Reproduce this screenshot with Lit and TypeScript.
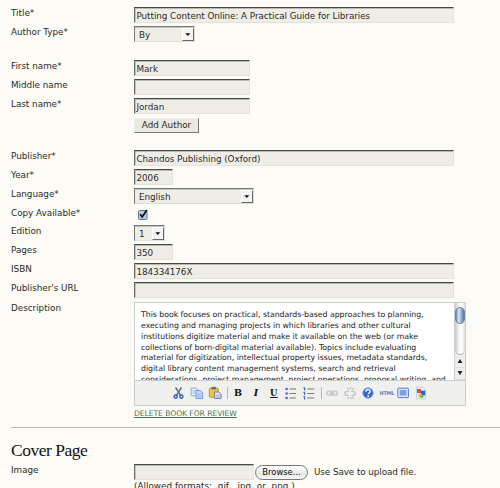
import { LitElement, html, svg, css } from "lit";
import { customElement, property } from "lit/decorators.js";

@customElement("form-row")
class FormRow extends LitElement {
  @property() label = "";
  static styles = css`
    :host { display: grid; grid-template-columns: 123px 1fr; height: 19px; }
    .label { white-space: nowrap; line-height: 12px; letter-spacing: -0.01px; }
    .body { display: flex; align-items: flex-start; min-width: 0; }
  `;
  render() {
    return html`<div class="label">${this.label}</div><div class="body"><slot></slot></div>`;
  }
}

@customElement("text-field")
class TextField extends LitElement {
  @property() value = "";
  static styles = css`
    :host {
      display: block; box-sizing: border-box; height: 16px; width: 320px; flex: none;
      background: #efeee6; border: 1px solid #e3e3da; border-top-color: #48484a; border-left-color: #6c6c6a;
      box-shadow: inset 0 1px #b9b9b4, inset 1px 0 #c4c4be;
      padding-left: 1.5px; line-height: 16px; letter-spacing: -0.055px; white-space: nowrap; overflow: hidden;
    }
    :host(.medium) { width: 116px; }
    :host(.small) { width: 39px; }
    :host(.file) { width: 120px; }
  `;
  render() { return html`${this.value}`; }
}

@customElement("select-field")
class SelectField extends LitElement {
  @property() value = "";
  static styles = css`
    :host {
      display: flex; box-sizing: border-box; height: 16px; width: 61px; flex: none; justify-content: space-between;
      background: #efeee6; border: 1px solid #deded6; border-top-color: #777775; border-left-color: #777775;
      box-shadow: inset 0 1px #c4c4be; padding: 1px 0 0 4px; line-height: 15px; letter-spacing: -0.05px;
    }
    :host(.wide) { width: 120px; }
    :host(.narrow) { width: 31px; }
    .arrow {
      box-sizing: border-box; width: 12px; height: 13px; background: #f3f3f5; flex: none;
      border: 1px solid #fff; border-right-color: #68686a; border-bottom-color: #68686a;
    }
    svg { display: block; }
  `;
  render() {
    return html`<span>${this.value}</span>
      <div class="arrow"><svg width="10" height="11" viewBox="0 0 10 11"><path d="M2.3 4.2h5L4.8 7z" fill="#111" /></svg></div>`;
  }
}

const listLines = [3, 7.5, 12];

const icons: Record<string, unknown> = {
  cut: svg`<path d="M2.6 1.5 7.7 9.6M8.4 1.5 3.3 9.6" stroke="#62738c" stroke-width="1.6" fill="none"/>
    <circle cx="2.7" cy="10.6" r="1.6" fill="none" stroke="#2b5fb0" stroke-width="1.4"/><circle cx="8.3" cy="10.6" r="1.6" fill="none" stroke="#2b5fb0" stroke-width="1.4"/>`,
  copy: svg`<path d="M.2 2h4.6l2 2v5.8H.2z" fill="#e3edff" stroke="#8eabe0"/><path d="M1.5 5h3M1.5 7h3" stroke="#a3bdec"/>
    <path d="M5 4.6h4.4l2.2 2.2v5.6H5z" fill="#c9dcff" stroke="#6f94d8"/><path d="M6.3 8.2h3.8M6.3 10.2h3.8" stroke="#8fb0ea"/>`,
  paste: svg`<rect x=".3" y="2.2" width="9" height="9" rx="1" fill="#f0c541" stroke="#b2983f"/><rect x="2.5" y=".8" width="4.5" height="2.6" rx=".8" fill="#6e7178"/>
    <path d="M5.4 6h4.3l2.4 2.2v4.2H5.4z" fill="#dbe5f6" stroke="#70829f"/><path d="M6.8 9.2h4M6.8 10.9h4" stroke="#8ba2c6" stroke-width=".8"/>`,
  bullets: svg`${listLines.map((y) => svg`<rect x=".5" y="${y - 1.1}" width="2.2" height="2.2" fill="#4264cb"/><path d="M4.5 ${y}h6.5" stroke="#777" stroke-width="1"/>`)}`,
  numbers: svg`${listLines.map((y) => svg`<path d="M.4 ${y - 1.2}h1.2v2.7" stroke="#4264cb" stroke-width="1.2" fill="none"/><path d="M4.2 ${y}h7" stroke="#777" stroke-width="1"/>`)}`,
  link: svg`<g fill="none" stroke="#bdc3ce" stroke-width="1.3"><rect x=".8" y="5.2" width="5.2" height="4" rx="2"/><rect x="6" y="5.2" width="5.2" height="4" rx="2"/><path d="M3.6 7.2h4.8"/></g>`,
  unlink: svg`<g fill="none" stroke="#bdc0c8" stroke-width="1.3"><path d="M4.8 5.4H3a2 2 0 0 0 0 4h1.8M7.2 5.4H9a2 2 0 0 1 0 4H7.2"/><path d="M3.2 1.8l1.4 1.9M6.6 1.2l-.3 2M9.8 2 8.2 3.7M3.8 12.8l.8-1.8M6.8 13v-2M9.6 12.6 8.2 11"/></g>`,
  help: svg`<circle cx="6" cy="7" r="5.2" fill="#3568c9" stroke="#8aa9e2" stroke-width="1"/><path d="M3.9 5.7c.2-3 4.5-2.6 4.2-.2C8 6.8 6.3 6.8 6.2 8.3" fill="none" stroke="#fff" stroke-width="1.4"/><circle cx="6.2" cy="10.2" r=".9" fill="#fff"/>`,
  full: svg`<rect x=".8" y="2.2" width="10.6" height="9.4" rx=".6" fill="#dfe9ff" stroke="#5b7fc6"/><rect x="2.7" y="4" width="6.8" height="5.6" fill="#7ba2ee"/>`,
  image: svg`<path d="M1.5 1.2h6.3l2.7 2.6v9h-9z" fill="#f4f8ff" stroke="#b2c6e8" stroke-width=".8"/><rect x="2" y="3" width="4" height="4" fill="#e34a34"/><rect x="5.8" y="4.6" width="4.4" height="4.8" fill="#2868d6"/><circle cx="5" cy="9.5" r="2.1" fill="#f1c730"/><path d="M5.4 9.4h3v2.2h-3z" fill="#4caa62"/>`,
};

@customElement("tool-icon")
class ToolIcon extends LitElement {
  @property() name = "";
  static styles = css`:host { display: block; width: 13px; height: 14px; flex: none; } svg { display: block; overflow: visible; }`;
  render() {
    return html`<svg width="13" height="14" viewBox="0 0 13 14">${icons[this.name]}</svg>`;
  }
}

const description = [
  "This book focuses on practical, standards-based approaches to planning,",
  "executing and managing projects in which libraries and other cultural",
  "institutions digitize material and make it available on the web (or make",
  "collections of born-digital material available). Topics include evaluating",
  "material for digitization, intellectual property issues, metadata standards,",
  "digital library content management systems, search and retrieval",
  "considerations, project management, project operations, proposal writing, and",
];

@customElement("rich-editor")
class RichEditor extends LitElement {
  static styles = css`
    :host { display: block; box-sizing: border-box; width: 332px; height: 104px; border: 1px solid #cdcdca; background: #f0f0ee; flex: none; }
    .top { display: flex; height: 78px; background: #fff; border-bottom: 1px solid #cdcdca; overflow: hidden; box-sizing: border-box; }
    .copy { flex: 1; padding: 7px 0 0 6px; font-size: 7.8px; letter-spacing: -0.03px; line-height: 10.85px; color: #222; white-space: nowrap; overflow: hidden; }
    .scroll { width: 11px; height: 77px; flex: none; background: #eee; border-left: 1px solid #d0d0d0; display: flex; flex-direction: column; box-sizing: border-box; }
    .track { height: 52px; background: linear-gradient(90deg, #c9c9c9, #fafafa 45%, #fff 70%, #dcdcdc); border-radius: 0 0 5px 5px; border-bottom: 1px solid #aaa; box-sizing: border-box; padding-top: 4px; }
    .thumb { height: 17px; box-sizing: border-box; border: 1px solid #69829e; border-radius: 5px; background: linear-gradient(90deg, #6685aa, #d9e9fa 35%, #91b1d5 65%, #577799); }
    .step { height: 12.5px; display: flex; align-items: center; justify-content: center; box-sizing: border-box; border-bottom: 1px solid #ddd; }
    .tools { display: flex; height: 24px; align-items: center; padding-left: 38px; }
    .tools > * { margin-right: 4.85px; flex: none; }
    .tools > .sep { width: 1px; height: 12px; background: #b9b9b7; margin: 0 4.1px 0 0; }
    .letter { width: 13px; text-align: center; font: bold 9.5px/14px "DejaVu Serif", serif; letter-spacing: 0; color: #111; }
    .i { font-style: italic; }
    .u { text-decoration: underline; font-size: 8.5px; }
    .html { font: bold 5px/14px "DejaVu Sans", sans-serif; letter-spacing: -0.25px; width: 13px; color: #6a80b8; }
  `;
  render() {
    return html`
      <div class="top">
        <div class="copy">${description.map((line) => html`<div>${line}</div>`)}</div>
        <div class="scroll">
          <div class="track"><div class="thumb"></div></div>
          <div class="step"><svg width="6" height="6"><path d="M.5 5h5L3 1z" fill="#222" /></svg></div>
          <div class="step"><svg width="6" height="6"><path d="M.5 1h5L3 5z" fill="#222" /></svg></div>
        </div>
      </div>
      <div class="tools">
        <tool-icon name="cut"></tool-icon><tool-icon name="copy"></tool-icon><tool-icon name="paste"></tool-icon>
        <div class="sep"></div>
        <span class="letter">B</span><span class="letter i">I</span><span class="letter u">U</span>
        <tool-icon name="bullets"></tool-icon><tool-icon name="numbers"></tool-icon>
        <div class="sep"></div>
        <tool-icon name="link"></tool-icon><tool-icon name="unlink"></tool-icon><tool-icon name="help"></tool-icon>
        <span class="html">HTML</span>
        <tool-icon name="full"></tool-icon><tool-icon name="image"></tool-icon>
      </div>`;
  }
}

@customElement("app-root")
class AppRoot extends LitElement {
  static styles = css`
    :host {
      display: block; box-sizing: border-box; width: 500px; height: 488px; overflow: hidden; padding: 7px 0 0 11px;
      background: #fcfbf5; color: #2b2b2b; font: 8.8px/12px "DejaVu Sans", Verdana, sans-serif;
    }
    .type { height: 34px; }
    .add { height: 33px; }
    .available { height: 18px; }
    .url { height: 20px; }
    .editor { height: 104px; }
    .button {
      box-sizing: border-box; width: 65px; height: 15px; margin: 1px 0 0 0; text-align: center; line-height: 13px; background: #e9e9e1;
      border: 1px solid #f2f2ec; border-right-color: #777; border-bottom-color: #777; white-space: nowrap;
    }
    .check { margin: 2px 0 0 4px; display: block; overflow: visible; }
    .delete { margin: 2px 0 0 123px; display: block; width: max-content; font-size: 7.6px; letter-spacing: -0.05px; line-height: 12px; color: #3f7458; text-decoration: underline; }
    .rule { height: 1px; margin-top: 7px; background: #b8b9b1; }
    h2 { margin: 12px 0 0; font: 17.5px/20px "Liberation Serif", serif; color: #111; letter-spacing: -0.5px; }
    .image { margin-top: 4px; height: 16px; }
    .browse {
      box-sizing: border-box; width: 53px; height: 15px; margin: 1px 6px 0 1px; flex: none; border: 1px solid #777; border-radius: 8px; text-align: center;
      line-height: 13px; font-size: 8.4px; color: #111; background: linear-gradient(#fff, #ededed 50%, #e2e2e2 51%, #fafafa);
    }
    .hint { line-height: 16px; white-space: nowrap; letter-spacing: -0.08px; }
    .formats { margin: 0 0 0 123px; line-height: 13px; white-space: nowrap; letter-spacing: 0.03px; }
  `;
  render() {
    return html`
      <form-row label="Title*"><text-field value="Putting Content Online: A Practical Guide for Libraries"></text-field></form-row>
      <form-row class="type" label="Author Type*"><select-field value="By"></select-field></form-row>
      <form-row label="First name*"><text-field class="medium" value="Mark"></text-field></form-row>
      <form-row label="Middle name"><text-field class="medium"></text-field></form-row>
      <form-row label="Last name*"><text-field class="medium" value="Jordan"></text-field></form-row>
      <form-row class="add"><div class="button">Add Author</div></form-row>
      <form-row label="Publisher*"><text-field value="Chandos Publishing (Oxford)"></text-field></form-row>
      <form-row label="Year*"><text-field class="small" value="2006"></text-field></form-row>
      <form-row label="Language*"><select-field class="wide" value="English"></select-field></form-row>
      <form-row class="available" label="Copy Available*">
        <svg class="check" width="10" height="11" viewBox="0 0 10 11"><rect x=".5" y="1.5" width="8.5" height="9" rx="1" fill="#b9cbe0" stroke="#68788c" /><path d="M2.2 5.2 4.2 8 8.8 1" fill="none" stroke="#0c1018" stroke-width="1.7" /></svg>
      </form-row>
      <form-row label="Edition"><select-field class="narrow" value="1"></select-field></form-row>
      <form-row label="Pages"><text-field class="small" value="350"></text-field></form-row>
      <form-row label="ISBN"><text-field value="184334176X"></text-field></form-row>
      <form-row class="url" label="Publisher's URL"><text-field></text-field></form-row>
      <form-row class="editor" label="Description"><rich-editor></rich-editor></form-row>
      <a class="delete">DELETE BOOK FOR REVIEW</a>
      <div class="rule"></div>
      <h2>Cover Page</h2>
      <form-row class="image" label="Image"><text-field class="file"></text-field><div class="browse">Browse...</div><span class="hint">Use Save to upload file.</span></form-row>
      <div class="formats">(Allowed formats: .gif, .jpg, or .png.)</div>`;
  }
}
